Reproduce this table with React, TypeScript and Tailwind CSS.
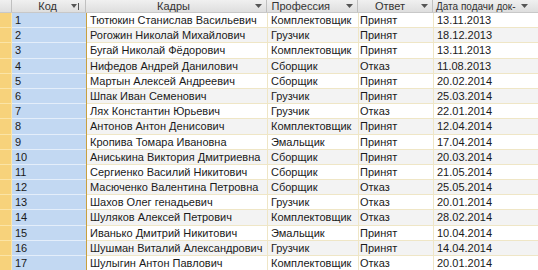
import React from 'react';

const rows: [string, string, string, string][] = [
  ['Тютюкин Станислав Васильевич', 'Комплектовщик', 'Принят', '13.11.2013'],
  ['Рогожин Николай Михайлович', 'Грузчик', 'Принят', '18.12.2013'],
  ['Бугай Николай Фёдорович', 'Комплектовщик', 'Принят', '13.11.2013'],
  ['Нифедов Андрей Данилович', 'Сборщик', 'Отказ', '11.08.2013'],
  ['Мартын Алексей Андреевич', 'Сборщик', 'Принят', '20.02.2014'],
  ['Шпак Иван Семенович', 'Грузчик', 'Принят', '25.03.2014'],
  ['Лях Константин Юрьевич', 'Грузчик', 'Отказ', '22.01.2014'],
  ['Антонов Антон Денисович', 'Комплектовщик', 'Принят', '12.04.2014'],
  ['Кропива Томара Ивановна', 'Эмальщик', 'Принят', '17.04.2014'],
  ['Аниськина Виктория Дмитриевна', 'Сборщик', 'Принят', '20.03.2014'],
  ['Сергиенко Василий Никитович', 'Сборщик', 'Принят', '21.05.2014'],
  ['Масюченко Валентина Петровна', 'Сборщик', 'Отказ', '25.05.2014'],
  ['Шахов Олег генадьевич', 'Грузчик', 'Отказ', '20.01.2014'],
  ['Шуляков Алексей Петрович', 'Комплектовщик', 'Отказ', '28.02.2014'],
  ['Иванько Дмитрий Никитович', 'Эмальщик', 'Принят', '10.04.2014'],
  ['Шушман Виталий Александрович', 'Грузчик', 'Принят', '14.04.2014'],
  ['Шулыгин Антон Павлович', 'Комплектовщик', 'Отказ', '20.01.2014'],
];

const Arrow = () => (
  <svg width="7" height="4" viewBox="0 0 7 4" className="shrink-0 block">
    <path d="M0 0h7L3.5 4z" fill="#555" />
  </svg>
);

const SortArrow = () => (
  <svg width="9" height="7" viewBox="0 0 9 7" className="shrink-0 block">
    <path d="M0 1h6L3 5z" fill="#555" />
    <rect x="7" y="0" width="1" height="7" fill="#555" />
  </svg>
);

export default function App() {
  return (
    <div
      className="w-[538px] h-[270px] overflow-hidden bg-white text-[11px] text-[#1a1a1a]"
      style={{ fontFamily: '"Liberation Sans", Arial, sans-serif' }}
    >
      {/* Header */}
      <div className="flex h-[13px] leading-[13px] bg-gradient-to-b from-[#f0f0f0] to-[#dedede] text-[#333] border-b border-[#c8c8c8]">
        <div className="w-[12px] shrink-0 border-r border-[#c0c0c0]" />
        <div className="w-[74px] shrink-0 flex items-center justify-end gap-[14px] pr-[5px] border-r border-[#c0c0c0]">
          <span>Код</span>
          <SortArrow />
        </div>
        <div className="w-[181px] shrink-0 flex items-center justify-end gap-[65px] pr-[4px] border-r border-[#c0c0c0]">
          <span>Кадры</span>
          <Arrow />
        </div>
        <div className="w-[91px] shrink-0 flex items-center justify-end gap-[16px] pr-[4px] border-r border-[#c0c0c0]">
          <span>Профессия</span>
          <Arrow />
        </div>
        <div className="w-[75px] shrink-0 flex items-center justify-end gap-[16px] pr-[4px] border-r border-[#c0c0c0]">
          <span>Ответ</span>
          <Arrow />
        </div>
        <div className="w-[105px] shrink-0 flex items-center gap-[5px] pl-[3px] overflow-hidden">
          <span className="text-[10px] whitespace-nowrap">Дата подачи док-</span>
          <Arrow />
        </div>
      </div>

      {/* Rows */}
      {rows.map((r, i) => (
        <div
          key={i}
          className={`flex h-[15.2px] leading-[14px] ${i % 2 === 1 ? 'bg-[#f3f3f3]' : 'bg-white'}`}
        >
          <div className="w-[12px] shrink-0 bg-[#f7d27b] border-b border-[#fbe4a6] border-r border-[#e0b050]" />
          <div className="w-[74px] shrink-0 bg-[#c2d8f2] border-b border-[#e4eefa] pl-[3px]">{i + 1}</div>
          <div className="w-[1px] shrink-0 bg-[#c8a040]" />
          <div className="w-[181px] shrink-0 pl-[3px] border-b border-r border-[#efe6c6] whitespace-nowrap overflow-hidden">
            {r[0]}
          </div>
          <div className="w-[91px] shrink-0 pl-[3px] border-b border-r border-[#efe6c6] whitespace-nowrap overflow-hidden">
            {r[1]}
          </div>
          <div className="w-[75px] shrink-0 pl-[1px] border-b border-r border-[#efe6c6] whitespace-nowrap overflow-hidden">
            {r[2]}
          </div>
          <div className="flex-1 pl-[3px] border-b border-[#efe6c6] whitespace-nowrap overflow-hidden">{r[3]}</div>
        </div>
      ))}
    </div>
  );
}
